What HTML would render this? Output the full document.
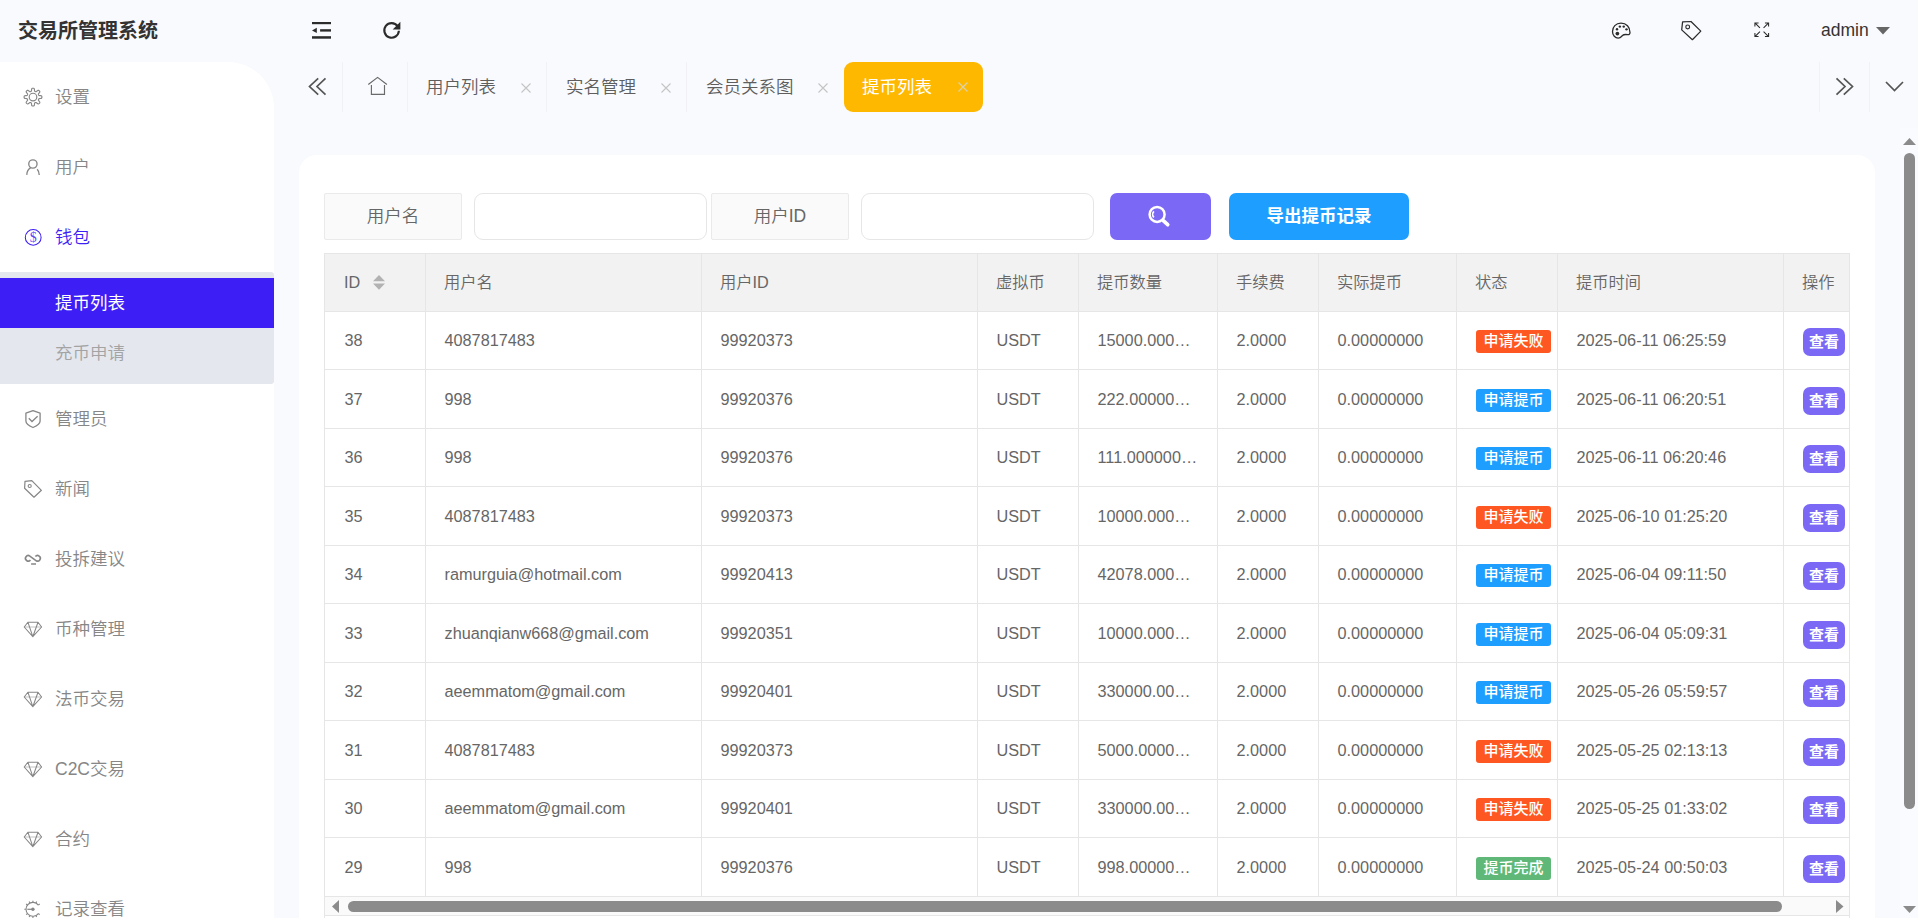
<!DOCTYPE html>
<html lang="zh-CN"><head><meta charset="utf-8"><title>交易所管理系统</title>
<style>
*{box-sizing:border-box;margin:0;padding:0}
html,body{width:1918px;height:918px;overflow:hidden}
body{position:relative;background:#f9fafd;font-family:"Liberation Sans","Noto Sans CJK SC",sans-serif;color:#666;font-size:17.5px}
.abs{position:absolute}
svg{position:absolute;overflow:visible}
#title{left:18px;top:17px;font-size:20px;line-height:28px;font-weight:700;color:#333}
#side{left:0;top:62px;width:274px;height:856px;background:#fff;border-top-right-radius:46px}
.mi{position:absolute;left:55px;font-size:17.5px;line-height:24px;color:#868686;white-space:nowrap;font-weight:350}
.mi.on{color:#3d1ff5}
#sub{left:0;top:272px;width:274px;height:112px;background:#e4e7ee;border-radius:0 3px 3px 0}
#subon{left:0;top:278px;width:274px;height:49.5px;background:#3d1ff5}
.tab{position:absolute;top:62px;height:50px;line-height:50px;font-size:17.5px;color:#5e5e5e;white-space:nowrap;font-weight:350}
.sep{position:absolute;top:62px;height:50px;width:1px;background:#f2f2f6}
.x{position:absolute;font-size:18px;color:#c2c2c2;line-height:50px;top:62px}
#tabon{left:844px;top:62px;width:139px;height:50px;background:#ffb800;border-radius:9px}
#card{left:299px;top:155px;width:1576px;height:800px;background:#fff;border-radius:18px}
.lab{position:absolute;top:193px;height:47px;background:#fafafa;border:1px solid #eaeaea;border-radius:2px;text-align:center;line-height:45px;font-size:17.5px;color:#666;font-weight:350}
.inp{position:absolute;top:193px;height:47px;background:#fff;border:1px solid #e6e6e6;border-radius:9px}
.btn{position:absolute;top:193px;height:47px;border-radius:7px;color:#fff;text-align:center;line-height:47px;font-size:17.5px;font-weight:700}
#tbl{left:324px;top:253px;width:1526px;height:700px;border:1px solid #e6e6e6;background:#fff;overflow:hidden}
#thead{left:0;top:0;width:1526px;height:57px;background:#f2f2f2}
.hl{position:absolute;left:0;width:1526px;height:1px;background:#e6e6e6}
.vl{position:absolute;top:0;width:1px;height:643px;background:#e6e6e6}
.th{position:absolute;top:0;height:57px;line-height:57px;font-size:16.25px;color:#666;white-space:nowrap;font-weight:350}
.td{position:absolute;height:58px;line-height:58px;font-size:16.25px;color:#666;white-space:nowrap}
.bdg{position:absolute;left:1151px;width:75px;height:23px;border-radius:3px;color:#fff;font-size:15px;line-height:22px;text-align:center;font-weight:500}
.view{position:absolute;left:1478px;width:42px;height:27.5px;border-radius:7px;background:#7b68f5;color:#fff;font-size:15px;line-height:27px;text-align:center;font-weight:700}
</style></head>
<body>
<div class="abs" id="title">交易所管理系统</div>
<svg style="left:312px;top:22px" width="19" height="17" viewBox="0 0 19 17"><g fill="#2b2b2b"><rect x="0" y="0" width="19" height="2.2"/><rect x="8.100" y="7.200" width="10.900" height="2.400"/><rect x="0" y="14.200" width="19" height="2.500"/><path d="M0 8.400L4.800 5.700v5.400z"/></g></svg>
<svg style="left:382px;top:21px" width="19" height="19" viewBox="0 0 19 19"><path d="M15.6 5.2A7.3 7.3 0 1 0 16.9 9.8" fill="none" stroke="#2b2b2b" stroke-width="2.100"/><path d="M18.400 .8v7.700h-7.700z" fill="#2b2b2b"/></svg>
<svg style="left:1611px;top:22px" width="20.500" height="17.500" viewBox="0 0 21 19"><path d="M10.200 1.200C4.600 1.200 1 5.400 1 10.200c0 4.400 3 7.300 6.200 7.300 2.600 0 3.300-1.500 4.600-2.800 1.500-1.500 3.400-1.300 5.600-1.000 1.600.2 2.600-.5 2.600-2.400C20 5.600 16 1.200 10.200 1.200z" fill="none" stroke="#2b2b2b" stroke-width="1.400"/><circle cx="6.300" cy="12.600" r="2" fill="#2b2b2b"/><circle cx="5.900" cy="7.900" r="1.300" fill="#2b2b2b"/><circle cx="9" cy="5" r="1.300" fill="#2b2b2b"/><circle cx="13.200" cy="5" r="1.300" fill="#2b2b2b"/><circle cx="16.200" cy="8" r="1.300" fill="#2b2b2b"/></svg>
<svg style="left:1681px;top:20px" width="21" height="21" viewBox="0 0 21 21"><path d="M1.600 1.800L10 1.500 19.800 11.100 11.400 19.700 .7 9.900Z" fill="none" stroke="#2b2b2b" stroke-width="1.250" stroke-linejoin="round"/><circle cx="6.700" cy="6.900" r="1.900" fill="none" stroke="#2b2b2b" stroke-width="1.150"/></svg>
<svg style="left:1753.500px;top:22px" width="15.500" height="15.500" viewBox="0 0 17 17"><g fill="none" stroke="#2b2b2b" stroke-width="1.150"><path d="M1 5V1h4M1 1l5.500 5.500"/><path d="M12 1h4v4M16 1l-5.500 5.500"/><path d="M1 12v4h4M1 16l5.500-5.500"/><path d="M12 16h4v-4M16 16l-5.500-5.500"/></g></svg>
<div class="abs" style="left:1821px;top:18px;font-size:17.5px;line-height:24px;color:#333">admin</div>
<svg style="left:1876px;top:27px" width="14" height="8" viewBox="0 0 14 8"><path d="M0 0h14L7 7.500z" fill="#666"/></svg>
<div class="abs" id="side"></div>
<div class="abs" id="sub"></div>
<div class="abs" id="subon"></div>
<div class="mi" style="top:85px">设置</div>
<div class="mi" style="top:155px">用户</div>
<div class="mi on" style="top:225px">钱包</div>
<div class="mi" style="top:407px">管理员</div>
<div class="mi" style="top:477px">新闻</div>
<div class="mi" style="top:547px">投拆建议</div>
<div class="mi" style="top:617px">币种管理</div>
<div class="mi" style="top:687px">法币交易</div>
<div class="mi" style="top:757px">C2C交易</div>
<div class="mi" style="top:827px">合约</div>
<div class="mi" style="top:897px">记录查看</div>
<div class="mi" style="top:291px;color:#fff;font-weight:400">提币列表</div>
<div class="mi" style="top:341px;color:#a3a3a3">充币申请</div>
<svg style="left:0;top:0" width="60" height="918" viewBox="0 0 60 918">
<path d="M33.00 88.20 L33.35 88.22 L33.69 88.27 L34.03 88.43 L34.30 88.87 L34.45 89.79 L34.53 90.71 L34.68 91.16 L34.87 91.35 L35.08 91.46 L35.30 91.56 L35.52 91.64 L35.74 91.71 L36.02 91.71 L36.43 91.50 L37.14 90.91 L37.90 90.36 L38.40 90.25 L38.75 90.37 L39.04 90.57 L39.29 90.81 L39.53 91.06 L39.73 91.35 L39.85 91.70 L39.74 92.20 L39.19 92.96 L38.60 93.67 L38.39 94.08 L38.39 94.36 L38.46 94.58 L38.54 94.80 L38.64 95.02 L38.75 95.23 L38.94 95.42 L39.39 95.57 L40.31 95.65 L41.23 95.80 L41.67 96.07 L41.83 96.41 L41.88 96.75 L41.90 97.10 L41.88 97.45 L41.83 97.79 L41.67 98.13 L41.23 98.40 L40.31 98.55 L39.39 98.63 L38.94 98.78 L38.75 98.97 L38.64 99.18 L38.54 99.40 L38.46 99.62 L38.39 99.84 L38.39 100.12 L38.60 100.53 L39.19 101.24 L39.74 102.00 L39.85 102.50 L39.73 102.85 L39.53 103.14 L39.29 103.39 L39.04 103.63 L38.75 103.83 L38.40 103.95 L37.90 103.84 L37.14 103.29 L36.43 102.70 L36.02 102.49 L35.74 102.49 L35.52 102.56 L35.30 102.64 L35.08 102.74 L34.87 102.85 L34.68 103.04 L34.53 103.49 L34.45 104.41 L34.30 105.33 L34.03 105.77 L33.69 105.93 L33.35 105.98 L33.00 106.00 L32.65 105.98 L32.31 105.93 L31.97 105.77 L31.70 105.33 L31.55 104.41 L31.47 103.49 L31.32 103.04 L31.13 102.85 L30.92 102.74 L30.70 102.64 L30.48 102.56 L30.26 102.49 L29.98 102.49 L29.57 102.70 L28.86 103.29 L28.10 103.84 L27.60 103.95 L27.25 103.83 L26.96 103.63 L26.71 103.39 L26.47 103.14 L26.27 102.85 L26.15 102.50 L26.26 102.00 L26.81 101.24 L27.40 100.53 L27.61 100.12 L27.61 99.84 L27.54 99.62 L27.46 99.40 L27.36 99.18 L27.25 98.97 L27.06 98.78 L26.61 98.63 L25.69 98.55 L24.77 98.40 L24.33 98.13 L24.17 97.79 L24.12 97.45 L24.10 97.10 L24.12 96.75 L24.17 96.41 L24.33 96.07 L24.77 95.80 L25.69 95.65 L26.61 95.57 L27.06 95.42 L27.25 95.23 L27.36 95.02 L27.46 94.80 L27.54 94.58 L27.61 94.36 L27.61 94.08 L27.40 93.67 L26.81 92.96 L26.26 92.20 L26.15 91.70 L26.27 91.35 L26.47 91.06 L26.71 90.81 L26.96 90.57 L27.25 90.37 L27.60 90.25 L28.10 90.36 L28.86 90.91 L29.57 91.50 L29.98 91.71 L30.26 91.71 L30.48 91.64 L30.70 91.56 L30.92 91.46 L31.13 91.35 L31.32 91.16 L31.47 90.71 L31.55 89.79 L31.70 88.87 L31.97 88.43 L32.31 88.27 L32.65 88.22Z" fill="none" stroke="#868686" stroke-width="1.15" stroke-linejoin="round"/>
<circle cx="33.0" cy="97.1" r="3.8" fill="none" stroke="#868686" stroke-width="1.15"/>
<circle cx="32.9" cy="164" r="4.15" fill="none" stroke="#868686" stroke-width="1.35"/>
<path d="M30.6 167.9C28.2 169.2 26.9 171.5 26.75 174.9" fill="none" stroke="#868686" stroke-width="1.35"/>
<path d="M37.2 169.2C38.6 170.7 39.2 172.5 39.25 174.9" fill="none" stroke="#868686" stroke-width="1.35"/>
<circle cx="33.2" cy="237.4" r="7.9" fill="none" stroke="#3d1ff5" stroke-width="1.05"/>
<text x="33.2" y="242.1" text-anchor="middle" font-family="Liberation Serif,serif" font-size="14" fill="#3d1ff5" fill-opacity=".85">$</text>
<path d="M33 410.7L25.9 413.2V421.1C25.9 424 29.2 426 33 427.5 36.8 426 40.1 424 40.1 421.100V413.200Z" fill="none" stroke="#868686" stroke-width="1.3" stroke-linejoin="round"/>
<path d="M28.800 418.300L32 421.500 37.600 416.200" fill="none" stroke="#868686" stroke-width="1.3"/>
<path d="M25 481.400L31.800 480.700 41.400 490.300 34 497.200 24.600 488.200Z" fill="none" stroke="#868686" stroke-width="1.200" stroke-linejoin="round"/>
<circle cx="29.700" cy="486" r="1.550" fill="none" stroke="#868686" stroke-width="1.100"/>
<path d="M30.42 559.99 A2.75 2.75 0 1 1 29.83 556.05 L35.97 560.55 A2.75 2.75 0 1 0 35.38 556.61" fill="none" stroke="#868686" stroke-width="1.600"/>
<path d="M31.100 564H36" stroke="#868686" stroke-width="1.500"/>
<path d="M24.300 627.0H41.500" stroke="#c8c8c8" stroke-width="1.100"/>
<path d="M27.900 622.2H38L41.600 627.0 32.800 636.7 24.200 627.0ZM27.900 622.2L32.800 636.7 38 622.2" fill="none" stroke="#868686" stroke-width="1.050" stroke-linejoin="round"/>
<path d="M24.300 697.0H41.500" stroke="#c8c8c8" stroke-width="1.100"/>
<path d="M27.900 692.2H38L41.600 697.0 32.800 706.7 24.200 697.0ZM27.900 692.2L32.800 706.7 38 692.2" fill="none" stroke="#868686" stroke-width="1.050" stroke-linejoin="round"/>
<path d="M24.300 767.0H41.500" stroke="#c8c8c8" stroke-width="1.100"/>
<path d="M27.900 762.2H38L41.600 767.0 32.800 776.7 24.200 767.0ZM27.900 762.2L32.800 776.7 38 762.2" fill="none" stroke="#868686" stroke-width="1.050" stroke-linejoin="round"/>
<path d="M24.300 837.0H41.500" stroke="#c8c8c8" stroke-width="1.100"/>
<path d="M27.900 832.2H38L41.600 837.0 32.800 846.7 24.200 837.0ZM27.900 832.2L32.800 846.7 38 832.2" fill="none" stroke="#868686" stroke-width="1.050" stroke-linejoin="round"/>
<path d="M38.34 905.05 A6.90 6.90 0 1 0 38.34 913.55" fill="none" stroke="#868686" stroke-width="1.100"/>
<path d="M38.34 905.05 L39.68 904.01 M35.92 903.10 L36.67 901.57 M32.90 902.40 L32.90 900.70 M29.88 903.10 L29.13 901.57 M27.46 905.05 L26.12 904.01 M26.00 909.30 L24.30 909.30 M27.46 913.55 L26.12 914.59 M29.88 915.50 L29.13 917.03 M32.90 916.20 L32.90 917.90 M35.92 915.50 L36.67 917.03 M38.34 913.55 L39.68 914.59" stroke="#868686" stroke-width="1.100"/>
<path d="M27.300 909.300H32" stroke="#868686" stroke-width="1.200"/>
<circle cx="32.900" cy="909.300" r="1.700" fill="#868686"/>
</svg>
<div class="abs" id="tabon"></div>
<div class="sep" style="left:342px"></div>
<div class="sep" style="left:407px"></div>
<div class="sep" style="left:546px"></div>
<div class="sep" style="left:686px"></div>
<div class="sep" style="left:1819px"></div>
<div class="sep" style="left:1869px"></div>
<div class="tab" style="left:426px;">用户列表</div>
<div class="tab" style="left:566px;">实名管理</div>
<div class="tab" style="left:706px;">会员关系图</div>
<div class="tab" style="left:862px;color:#fff;font-weight:400">提币列表</div>
<svg style="left:308px;top:77px" width="19" height="19" viewBox="0 0 19 19"><path d="M10.200 1.300L1.500 9.500 10.200 17.700M17.500 1.300L9 9.500 17.500 17.700" fill="none" stroke="#555" stroke-width="1.700"/></svg>
<svg style="left:1835px;top:77px" width="19" height="19" viewBox="0 0 19 19"><path d="M8.800 1.300L17.500 9.500 8.800 17.700M1.500 1.300L10 9.500 1.500 17.700" fill="none" stroke="#555" stroke-width="1.700"/></svg>
<svg style="left:1885px;top:81px" width="19" height="11" viewBox="0 0 19 11"><path d="M1 1l8.500 8.500L18 1" fill="none" stroke="#555" stroke-width="1.7"/></svg>
<svg style="left:367px;top:76px" width="22" height="20" viewBox="0 0 22 20"><path d="M1.300 8.500L10.600 1.400l9.300 7.100" fill="none" stroke="#666" stroke-width="1.150"/><path d="M4.400 9.100V18.300h13.100V9.100" fill="none" stroke="#6a6a6a" stroke-width="1.150"/></svg>
<svg style="left:521px;top:82.5px" width="10" height="10" viewBox="0 0 10 10"><path d="M.5.5l9 9M9.500.5l-9 9" stroke="#c4c4c4" stroke-width="1.100"/></svg>
<svg style="left:661px;top:82.5px" width="10" height="10" viewBox="0 0 10 10"><path d="M.5.5l9 9M9.500.5l-9 9" stroke="#c4c4c4" stroke-width="1.100"/></svg>
<svg style="left:818px;top:82.5px" width="10" height="10" viewBox="0 0 10 10"><path d="M.5.5l9 9M9.500.5l-9 9" stroke="#c4c4c4" stroke-width="1.100"/></svg>
<svg style="left:958px;top:82px" width="10" height="10" viewBox="0 0 10 10"><path d="M.5.5l9 9M9.500.5l-9 9" stroke="#d8d2b4" stroke-width="1.100"/></svg>
<div class="abs" id="card"></div>
<div class="lab" style="left:324px;width:138px">用户名</div>
<div class="inp" style="left:474px;width:233px"></div>
<div class="lab" style="left:711px;width:138px">用户ID</div>
<div class="inp" style="left:861px;width:233px"></div>
<div class="btn" style="left:1110px;width:101px;background:#7b68f5"></div>
<div class="btn" style="left:1229px;width:180px;background:#1e9fff">导出提币记录</div>
<svg style="left:1147px;top:205px" width="24" height="24" viewBox="0 0 24 24"><circle cx="10.1" cy="9.4" r="7.500" fill="none" stroke="#fff" stroke-width="2.500"/><path d="M16.300 15.700l4.400 4" stroke="#fff" stroke-width="3.700" stroke-linecap="round"/><path d="M6.900 12.400a4.300 4.300 0 0 1 0-6" fill="none" stroke="#fff" stroke-width="1.700"/></svg>
<div class="abs" id="tbl">
<div class="abs" id="thead"></div>
<div class="hl" style="top:57px"></div>
<div class="hl" style="top:115px"></div>
<div class="hl" style="top:174px"></div>
<div class="hl" style="top:232px"></div>
<div class="hl" style="top:291px"></div>
<div class="hl" style="top:349px"></div>
<div class="hl" style="top:408px"></div>
<div class="hl" style="top:466px"></div>
<div class="hl" style="top:525px"></div>
<div class="hl" style="top:583px"></div>
<div class="hl" style="top:642px"></div>
<div class="vl" style="left:100px"></div>
<div class="vl" style="left:376px"></div>
<div class="vl" style="left:652px"></div>
<div class="vl" style="left:753px"></div>
<div class="vl" style="left:892px"></div>
<div class="vl" style="left:993px"></div>
<div class="vl" style="left:1131px"></div>
<div class="vl" style="left:1232px"></div>
<div class="vl" style="left:1458px"></div>
<div class="th" style="left:19px">ID</div>
<div class="th" style="left:119px">用户名</div>
<div class="th" style="left:395px">用户ID</div>
<div class="th" style="left:671px">虚拟币</div>
<div class="th" style="left:772px">提币数量</div>
<div class="th" style="left:911px">手续费</div>
<div class="th" style="left:1012px">实际提币</div>
<div class="th" style="left:1150px">状态</div>
<div class="th" style="left:1251px">提币时间</div>
<div class="th" style="left:1477px">操作</div>
<svg style="left:48px;top:21px" width="12" height="16" viewBox="0 0 12 16"><path d="M0 6.200L6 0l6 6.200z" fill="#b2b2b2"/><path d="M0 8.600L6 14.800l6-6.200z" fill="#b2b2b2"/></svg>
<div class="td" style="left:19.5px;top:57px">38</div><div class="td" style="left:119.5px;top:57px">4087817483</div><div class="td" style="left:395.5px;top:57px">99920373</div><div class="td" style="left:671.5px;top:57px">USDT</div><div class="td" style="left:772.5px;top:57px">15000.000…</div><div class="td" style="left:911.5px;top:57px">2.0000</div><div class="td" style="left:1012.5px;top:57px">0.00000000</div><div class="td" style="left:1251.5px;top:57px">2025-06-11 06:25:59</div><div class="bdg" style="top:76.0px;background:#ff5722">申请失败</div><div class="view" style="top:74.0px">查看</div>
<div class="td" style="left:19.5px;top:116px">37</div><div class="td" style="left:119.5px;top:116px">998</div><div class="td" style="left:395.5px;top:116px">99920376</div><div class="td" style="left:671.5px;top:116px">USDT</div><div class="td" style="left:772.5px;top:116px">222.00000…</div><div class="td" style="left:911.5px;top:116px">2.0000</div><div class="td" style="left:1012.5px;top:116px">0.00000000</div><div class="td" style="left:1251.5px;top:116px">2025-06-11 06:20:51</div><div class="bdg" style="top:135.0px;background:#1e9fff">申请提币</div><div class="view" style="top:133.0px">查看</div>
<div class="td" style="left:19.5px;top:174px">36</div><div class="td" style="left:119.5px;top:174px">998</div><div class="td" style="left:395.5px;top:174px">99920376</div><div class="td" style="left:671.5px;top:174px">USDT</div><div class="td" style="left:772.5px;top:174px">111.000000…</div><div class="td" style="left:911.5px;top:174px">2.0000</div><div class="td" style="left:1012.5px;top:174px">0.00000000</div><div class="td" style="left:1251.5px;top:174px">2025-06-11 06:20:46</div><div class="bdg" style="top:193.0px;background:#1e9fff">申请提币</div><div class="view" style="top:191.0px">查看</div>
<div class="td" style="left:19.5px;top:233px">35</div><div class="td" style="left:119.5px;top:233px">4087817483</div><div class="td" style="left:395.5px;top:233px">99920373</div><div class="td" style="left:671.5px;top:233px">USDT</div><div class="td" style="left:772.5px;top:233px">10000.000…</div><div class="td" style="left:911.5px;top:233px">2.0000</div><div class="td" style="left:1012.5px;top:233px">0.00000000</div><div class="td" style="left:1251.5px;top:233px">2025-06-10 01:25:20</div><div class="bdg" style="top:252.0px;background:#ff5722">申请失败</div><div class="view" style="top:250.0px">查看</div>
<div class="td" style="left:19.5px;top:291px">34</div><div class="td" style="left:119.5px;top:291px">ramurguia@hotmail.com</div><div class="td" style="left:395.5px;top:291px">99920413</div><div class="td" style="left:671.5px;top:291px">USDT</div><div class="td" style="left:772.5px;top:291px">42078.000…</div><div class="td" style="left:911.5px;top:291px">2.0000</div><div class="td" style="left:1012.5px;top:291px">0.00000000</div><div class="td" style="left:1251.5px;top:291px">2025-06-04 09:11:50</div><div class="bdg" style="top:310.0px;background:#1e9fff">申请提币</div><div class="view" style="top:308.0px">查看</div>
<div class="td" style="left:19.5px;top:350px">33</div><div class="td" style="left:119.5px;top:350px">zhuanqianw668@gmail.com</div><div class="td" style="left:395.5px;top:350px">99920351</div><div class="td" style="left:671.5px;top:350px">USDT</div><div class="td" style="left:772.5px;top:350px">10000.000…</div><div class="td" style="left:911.5px;top:350px">2.0000</div><div class="td" style="left:1012.5px;top:350px">0.00000000</div><div class="td" style="left:1251.5px;top:350px">2025-06-04 05:09:31</div><div class="bdg" style="top:369.0px;background:#1e9fff">申请提币</div><div class="view" style="top:367.0px">查看</div>
<div class="td" style="left:19.5px;top:408px">32</div><div class="td" style="left:119.5px;top:408px">aeemmatom@gmail.com</div><div class="td" style="left:395.5px;top:408px">99920401</div><div class="td" style="left:671.5px;top:408px">USDT</div><div class="td" style="left:772.5px;top:408px">330000.00…</div><div class="td" style="left:911.5px;top:408px">2.0000</div><div class="td" style="left:1012.5px;top:408px">0.00000000</div><div class="td" style="left:1251.5px;top:408px">2025-05-26 05:59:57</div><div class="bdg" style="top:427.0px;background:#1e9fff">申请提币</div><div class="view" style="top:425.0px">查看</div>
<div class="td" style="left:19.5px;top:467px">31</div><div class="td" style="left:119.5px;top:467px">4087817483</div><div class="td" style="left:395.5px;top:467px">99920373</div><div class="td" style="left:671.5px;top:467px">USDT</div><div class="td" style="left:772.5px;top:467px">5000.0000…</div><div class="td" style="left:911.5px;top:467px">2.0000</div><div class="td" style="left:1012.5px;top:467px">0.00000000</div><div class="td" style="left:1251.5px;top:467px">2025-05-25 02:13:13</div><div class="bdg" style="top:486.0px;background:#ff5722">申请失败</div><div class="view" style="top:484.0px">查看</div>
<div class="td" style="left:19.5px;top:525px">30</div><div class="td" style="left:119.5px;top:525px">aeemmatom@gmail.com</div><div class="td" style="left:395.5px;top:525px">99920401</div><div class="td" style="left:671.5px;top:525px">USDT</div><div class="td" style="left:772.5px;top:525px">330000.00…</div><div class="td" style="left:911.5px;top:525px">2.0000</div><div class="td" style="left:1012.5px;top:525px">0.00000000</div><div class="td" style="left:1251.5px;top:525px">2025-05-25 01:33:02</div><div class="bdg" style="top:544.0px;background:#ff5722">申请失败</div><div class="view" style="top:542.0px">查看</div>
<div class="td" style="left:19.5px;top:584px">29</div><div class="td" style="left:119.5px;top:584px">998</div><div class="td" style="left:395.5px;top:584px">99920376</div><div class="td" style="left:671.5px;top:584px">USDT</div><div class="td" style="left:772.5px;top:584px">998.00000…</div><div class="td" style="left:911.5px;top:584px">2.0000</div><div class="td" style="left:1012.5px;top:584px">0.00000000</div><div class="td" style="left:1251.5px;top:584px">2025-05-24 00:50:03</div><div class="bdg" style="top:603.0px;background:#5fb878">提币完成</div><div class="view" style="top:601.0px">查看</div>
</div>
<div class="abs" style="left:325px;top:897px;width:1524px;height:19px;background:#fafafa;border-bottom:1px solid #e6e6e6"></div>
<div class="abs" style="left:348px;top:901px;width:1434px;height:11px;background:#8b8b8b;border-radius:6px"></div>
<svg style="left:332px;top:900px" width="7" height="13" viewBox="0 0 7 13"><path d="M7 0v13L0 6.500z" fill="#8b8b8b"/></svg>
<svg style="left:1836px;top:900px" width="7.5" height="13" viewBox="0 0 7.5 13"><path d="M0 0v13l7.500-6.500z" fill="#8b8b8b"/></svg>
<div class="abs" style="left:1900px;top:128px;width:18px;height:790px;background:#fafbfe"></div>
<div class="abs" style="left:1904px;top:153px;width:11px;height:656px;background:#8b8b8b;border-radius:6px"></div>
<svg style="left:1902.500px;top:138px" width="13" height="7" viewBox="0 0 13 7"><path d="M0 7h13L6.500 0z" fill="#8b8b8b"/></svg>
<svg style="left:1902.500px;top:906px" width="13" height="7" viewBox="0 0 13 7"><path d="M0 0h13L6.500 7z" fill="#8b8b8b"/></svg>
</body></html>
